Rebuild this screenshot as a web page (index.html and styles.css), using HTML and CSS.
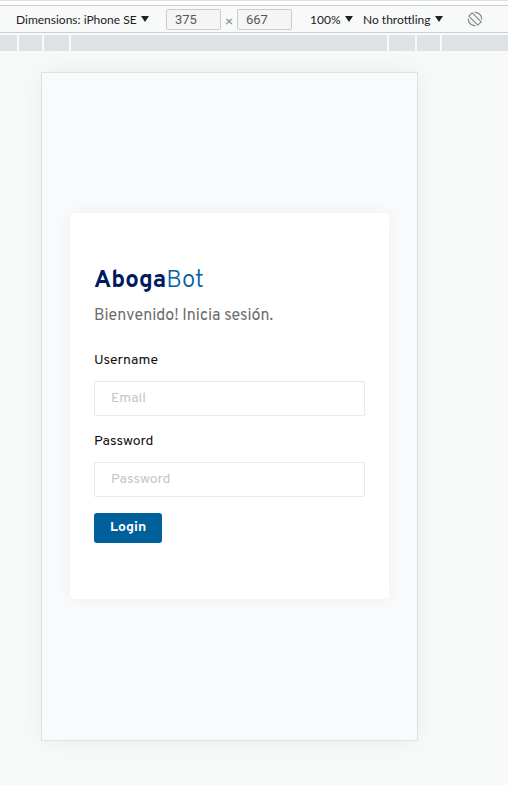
FILE: index.html
```html
<!DOCTYPE html>
<html lang="es">
<head>
<meta charset="utf-8">
<meta name="viewport" content="width=device-width, initial-scale=1">
<title>AbogaBot</title>
<link rel="stylesheet" href="styles.css">
</head>
<body>
<header class="toolbar">
  <label class="picker picker-device"><select aria-label="Device"><option>Dimensions: iPhone SE</option></select></label>
  <div class="size">
    <input class="size-input" type="text" value="375" aria-label="Width">
    <span class="times">×</span>
    <input class="size-input" type="text" value="667" aria-label="Height">
  </div>
  <label class="picker picker-zoom"><select aria-label="Zoom"><option>100%</option></select></label>
  <label class="picker"><select aria-label="Throttling"><option>No throttling</option></select></label>
  <button class="rotate" type="button" aria-label="Rotate">
    <svg width="16" height="16" viewBox="0 0 16 16" fill="none" stroke="#85888a" stroke-width="1.2">
      <path d="M5.2 1.8 14.2 10.8 10.8 14.2 1.8 5.2Z" stroke-linejoin="round"/>
      <path d="M7.5 1.3A6.7 6.7 0 0 1 14.7 8.5M8.5 14.7A6.7 6.7 0 0 1 1.3 7.5"/>
    </svg>
  </button>
</header>
<div class="ruler"><i></i><i></i><i></i><i></i><i></i><i></i><i></i></div>
<main class="device">
  <form class="card">
    <h1 class="brand"><strong>Aboga</strong>Bot</h1>
    <p class="welcome">Bienvenido! Inicia sesión.</p>
    <label class="label" for="username">Username</label>
    <input class="field" id="username" type="email" placeholder="Email">
    <label class="label" for="password">Password</label>
    <input class="field" id="password" type="password" placeholder="Password">
    <button class="login" type="button">Login</button>
  </form>
</main>
</body>
</html>
```
FILE: styles.css
```css
* {
  box-sizing: border-box;
}

body {
  margin: 0;
  min-height: 100vh;
  display: flex;
  flex-direction: column;
  background: #f8faf9;
  border-top: 1px solid #dfe0e2;
  font-family: Overpass, Roboto, sans-serif;
}

.toolbar {
  display: flex;
  align-items: center;
  height: 28px;
  margin-top: 4px;
  padding-left: 16px;
  border-top: 1px solid #cacdd1;
  border-bottom: 1px solid #cacdd1;
  box-shadow: 0 -4px #fff;
  font: 12px Lato, sans-serif;
  color: #202124;
}

.picker {
  display: flex;
  align-items: center;
  gap: 4px;
}

.picker::after {
  content: "";
  border: 4px solid transparent;
  border-top: 6px solid #202124;
  border-bottom: 0;
}

.picker select {
  appearance: none;
  border: 0;
  padding: 0;
  background: none;
  font: inherit;
  color: inherit;
}

.size {
  display: flex;
  align-items: center;
  gap: 4px;
  margin: 0 18px 0 17px;
}

.size-input {
  width: 55px;
  height: 21px;
  padding: 0 8px;
  border: 1px solid #cbcccc;
  border-radius: 2px;
  background: #f5f5f5;
  font: 13px Roboto, sans-serif;
  color: #55585c;
}

.times {
  width: 8px;
  padding-top: 2px;
  font-size: 14px;
  color: #6f7c88;
}

.picker-zoom {
  margin-right: 10px;
}

.rotate {
  display: flex;
  margin-left: 24px;
  padding: 0;
  border: 0;
  background: none;
}

.ruler {
  display: grid;
  grid-template-columns: 17px 23px 25px 1fr 26px 23px 66px;
  gap: 2px;
  height: 16px;
  margin-top: 2px;
}

.ruler i {
  background: #dee1e6;
}

.device {
  flex: 1;
  display: flex;
  flex-direction: column;
  justify-content: center;
  margin: 21px 90px 44px 41px;
  padding: 28px 28px 30px;
  border: 1px solid #dfe1e3;
  background: #f9fafc;
  box-shadow: 0 0 24px rgba(0, 0, 0, 0.06);
}

.card {
  display: flex;
  flex-direction: column;
  padding: 54px 24px 56px;
  border-radius: 4px;
  background: #fff;
  box-shadow: 0 0 16px rgba(30, 40, 60, 0.05);
}

.brand {
  margin: 0 0 8px;
  font-size: 24px;
  line-height: 28px;
  font-weight: 300;
  color: #00609c;
}

.brand strong {
  font-weight: 700;
  color: #001a60;
}

.welcome {
  margin: 0 0 22px;
  font-size: 16px;
  line-height: 26px;
  color: #6c6c6c;
}

.label {
  margin-bottom: 10px;
  font-size: 14px;
  line-height: 20px;
  color: #101010;
}

.field {
  width: 100%;
  height: 35px;
  margin-bottom: 16px;
  padding: 0 16px;
  border: 1px solid #e8e8f1;
  border-radius: 2px;
  background: #fff;
  font: 14px Overpass, Roboto, sans-serif;
}

.field::placeholder {
  color: #c6c6c6;
}

.login {
  align-self: flex-start;
  height: 30px;
  padding: 0 16px;
  border: 0;
  border-radius: 3px;
  background: #00609c;
  font: 700 14px Overpass, Roboto, sans-serif;
  color: #fff;
}
```
